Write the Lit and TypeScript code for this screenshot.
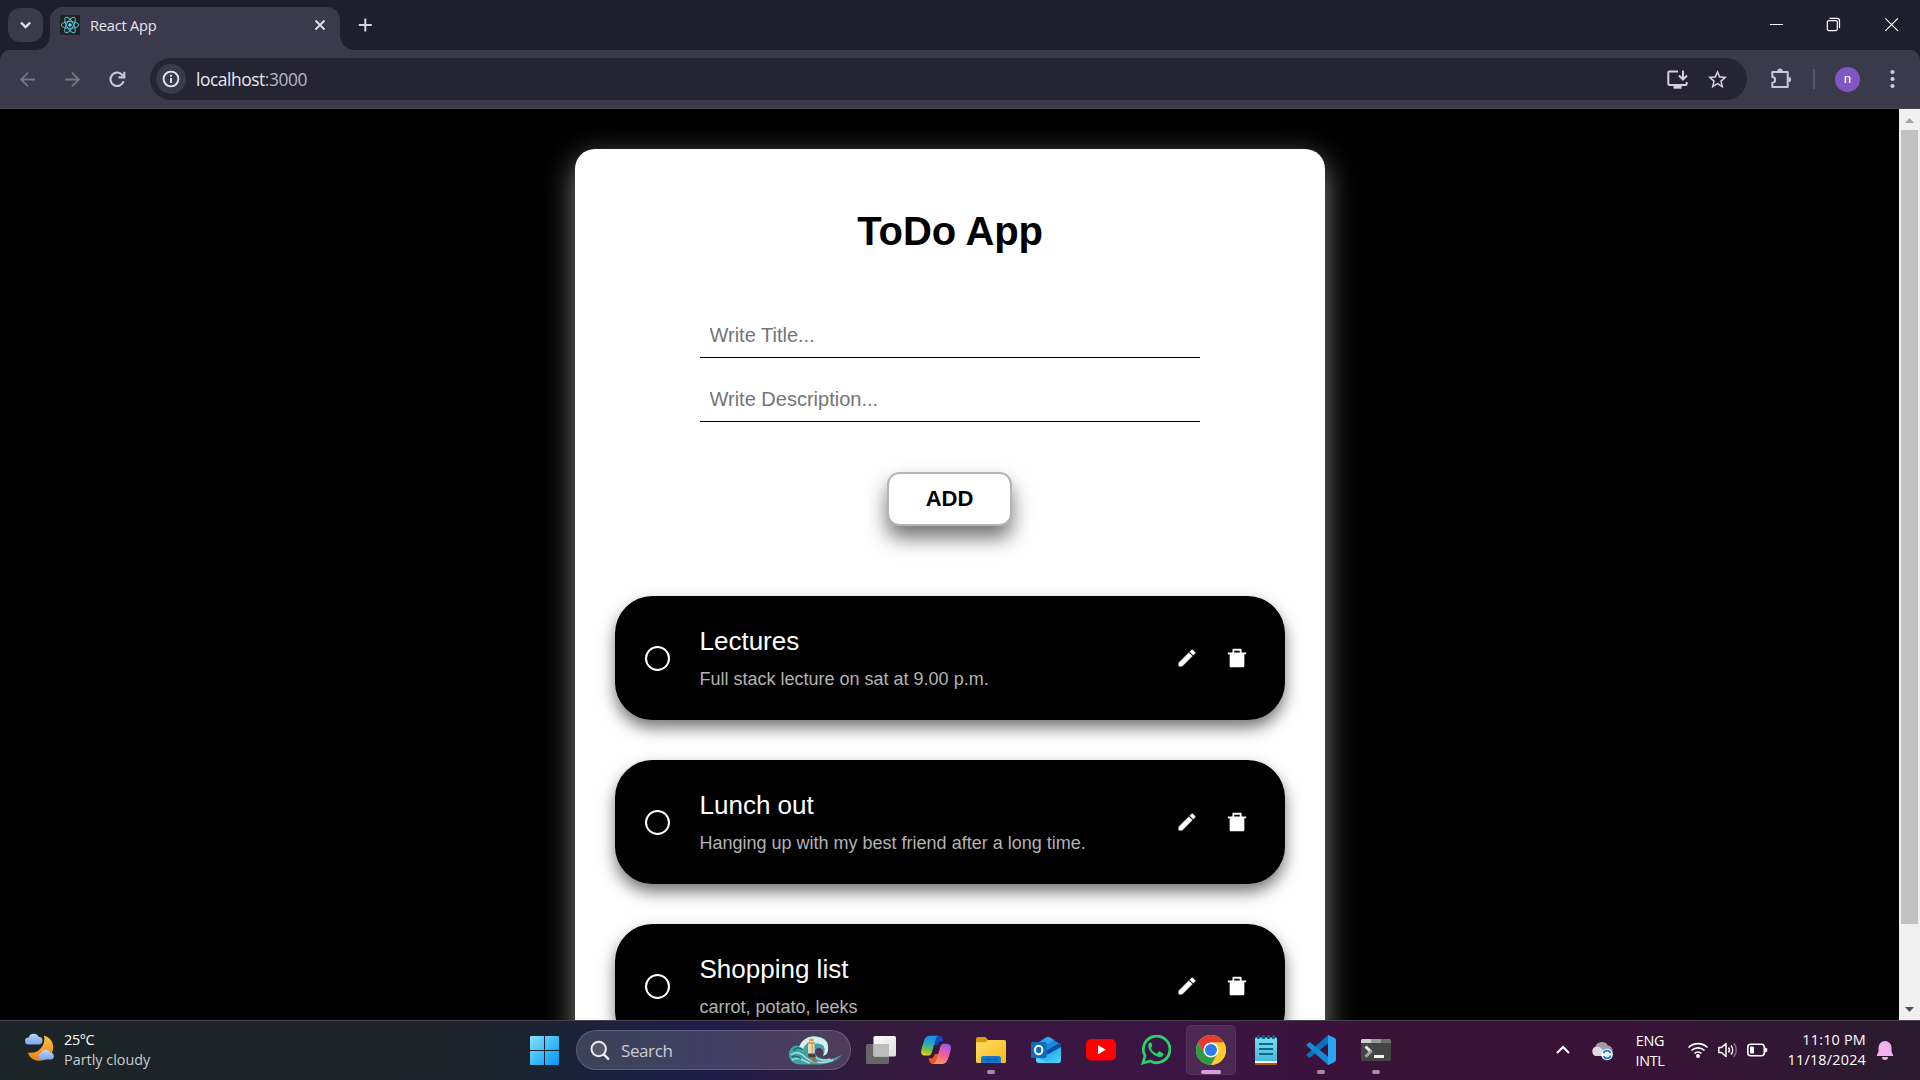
import { LitElement, html, css, svg } from "lit";
import { customElement, property } from "lit/decorators.js";

const uiFont = css`"Open Sans", "Noto Sans", sans-serif`;
const pageFont = css`"Liberation Sans", Arial, sans-serif`;

interface Todo {
  title: string;
  text: string;
}

const todos: Todo[] = [
  { title: "Lectures", text: "Full stack lecture on sat at 9.00 p.m." },
  { title: "Lunch out", text: "Hanging up with my best friend after a long time." },
  { title: "Shopping list", text: "carrot, potato, leeks" },
];

/* ---------- Browser chrome ---------- */

@customElement("browser-bar")
class BrowserBar extends LitElement {
  static styles = css`
    :host { display: block; font-family: ${uiFont}; }
    svg { display: block; }
    .strip { height: 50px; background: #1e1e2f; display: flex; box-sizing: border-box; padding-left: 8px; }
    .chevron { width: 35px; height: 34px; margin-top: 8px; border-radius: 12px; background: #3a3a4c; }
    .tab { position: relative; width: 290px; height: 43px; margin: 7px 0 0 7px; border-radius: 13px 13px 0 0;
      background: #3a3a4c; display: flex; align-items: center; box-sizing: border-box; padding: 0 13px 7px 10px; }
    .flare { position: absolute; bottom: 0; width: 14px; height: 14px; }
    .left { right: 100%; background: radial-gradient(circle at 0 0, transparent 13.5px, #3a3a4c 14px); }
    .right { left: 100%; background: radial-gradient(circle at 100% 0, transparent 13.5px, #3a3a4c 14px); }
    .name { margin-left: 10px; font-size: 14.6px; line-height: 20px; color: #e6e4f0; letter-spacing: -0.2px; flex: 1; }
    .plus { margin: 16px 0 0 16px; }
    .controls { margin-left: auto; display: flex; padding: 17px 19px 0 0; gap: 42px; }
    .corners { background: #1e1e2f; }
    .toolbar { height: 58px; background: #3a3a4c; border-radius: 10px 10px 0 0; display: flex; align-items: center;
      box-sizing: border-box; padding: 0 19px 0 17px; }
    .nav { display: flex; gap: 24px; width: 133px; }
    .omni { width: 1597px; height: 42px; border-radius: 21px; background: #242433; display: flex; align-items: center;
      box-sizing: border-box; padding: 0 18px 0 6px; }
    .info { width: 30px; height: 30px; border-radius: 50%; background: #3a3a4c; }
    .url { margin-left: 10px; flex: 1; font-size: 17.4px; letter-spacing: -0.45px; color: #e8e6f2; line-height: 24px; }
    .port { color: #b9b7cb; }
    .inner { display: flex; gap: 17px; }
    .ext { margin-left: 22px; }
    .sep { width: 2px; height: 20px; margin-left: 20px; background: #57566b; }
    .avatar { width: 25px; height: 25px; border-radius: 50%; background: #7e57c2; color: #fff; text-align: center;
      font: 13.5px/23px Roboto, sans-serif; margin-left: 20px; }
    .dots { margin-left: auto; }
    .edge { height: 1px; background: #48484e; }
  `;

  render() {
    return html`
      <div class="strip">
        <div class="chevron">
          <svg width="35" height="34" fill="none" stroke="#e4e3f0" stroke-width="2.2"><path d="M13 14.5l4.6 4.6 4.6-4.6" /></svg>
        </div>
        <div class="tab">
          <span class="flare left"></span><span class="flare right"></span>
          <svg width="20" height="20" viewBox="0 0 20 20">
            <rect width="20" height="20" rx="1" fill="#222" />
            <g fill="none" stroke="#52bdd8" stroke-width="1">
              <ellipse cx="10" cy="10" rx="8.8" ry="3.4" />
              <ellipse cx="10" cy="10" rx="8.8" ry="3.4" transform="rotate(60 10 10)" />
              <ellipse cx="10" cy="10" rx="8.8" ry="3.4" transform="rotate(120 10 10)" />
            </g>
            <circle cx="10" cy="10" r="1.7" fill="#61dafb" />
          </svg>
          <span class="name">React App</span>
          <svg width="14" height="14" stroke="#e4e3f0" stroke-width="1.8"><path d="M2.5 2.5l9 9M11.5 2.5l-9 9" /></svg>
        </div>
        <svg class="plus" width="18" height="18" stroke="#d4d2e6" stroke-width="2"><path d="M9.3 2.5v13M2.8 9h13" /></svg>
        <div class="controls">
          <svg width="18" height="17" stroke="#fff"><path d="M5 7.5h13" /></svg>
          <svg width="17" height="17" fill="none" stroke="#fff" stroke-width="1.2">
            <rect x="2.3" y="3.6" width="10" height="10" rx="1.5" />
            <path d="M4.5 1.3h7.6a2.4 2.4 0 0 1 2.4 2.4v7.6" />
          </svg>
          <svg width="17" height="17" stroke="#fff" stroke-width="1.2"><path d="M1.3 1.3l12.600 12.600M13.900 1.300L1.300 13.900" /></svg>
        </div>
      </div>
      <div class="corners">
        <div class="toolbar">
          <div class="nav">
            <svg width="21" height="21" fill="none" stroke="#757485" stroke-width="1.9"><path d="M18 10.5H4.5M11 3.7L4.2 10.5l6.800 6.800" /></svg>
            <svg width="21" height="21" fill="none" stroke="#757485" stroke-width="1.9"><path d="M3 10.5h13.5M10 3.7l6.8 6.8L10 17.300" /></svg>
            <svg width="21" height="21" fill="none" stroke="#c9c7dc" stroke-width="2.1">
              <path d="M16.6 12.3A6.700 6.700 0 1 1 15.2 5.8L17 7.8" /><path d="M17.3 2.7v5.700h-5.800" />
            </svg>
          </div>
          <div class="omni">
            <div class="info">
              <svg width="30" height="30" fill="none" stroke="#e4e3f0" stroke-width="1.9">
                <circle cx="15" cy="15" r="7.400" /><path d="M15 14v5M15 10.800v2" />
              </svg>
            </div>
            <span class="url">localhost<span class="port">:3000</span></span>
            <div class="inner">
              <svg width="23" height="23" fill="none" stroke="#d6d0dd" stroke-width="2">
                <path d="M12 3.600H3.500a1.200 1.200 0 0 0-1.200 1.200v11a1.200 1.200 0 0 0 1.200 1.200h16a1.200 1.200 0 0 0 1.200-1.200V14" />
                <path d="M7.500 19.200h8" stroke-width="3" /><path d="M17 2.500v8.500M13 7.500l4 4 4-4" />
              </svg>
              <svg width="23" height="23" viewBox="0 0 24 24" fill="#d6d0dd">
                <path d="M22 9.240l-7.190-.62L12 2 9.190 8.630 2 9.240l5.460 4.730L5.820 21 12 17.270 18.180 21l-1.630-7.030L22 9.240zM12 15.400l-3.760 2.270 1-4.280-3.320-2.880 4.380-.38L12 6.100l1.710 4.040 4.380.38-3.320 2.880 1 4.280L12 15.400z" />
              </svg>
            </div>
          </div>
          <svg class="ext" width="24" height="24" fill="none" stroke="#c9c7e0" stroke-width="2">
            <path d="M3.300 4.900H18.700v15.100H3.300v-4.300a2.700 2.700 0 0 0 0-5.700z" stroke-linejoin="round" />
            <path d="M8.400 4.100a2.600 2.600 0 0 1 5.200 0zM19.500 9.800a2.600 2.600 0 0 1 0 5.200z" fill="#c9c7e0" stroke="none" />
          </svg>
          <div class="sep"></div>
          <div class="avatar">n</div>
          <svg class="dots" width="17" height="24" fill="#d0cfe2">
            <circle cx="8.500" cy="5" r="2.100" /><circle cx="8.500" cy="12" r="2.100" /><circle cx="8.500" cy="19" r="2.100" />
          </svg>
        </div>
      </div>
      <div class="edge"></div>
    `;
  }
}

/* ---------- Todo page ---------- */

@customElement("todo-item")
class TodoItem extends LitElement {
  @property({ attribute: false }) todo!: Todo;

  static styles = css`
    :host { display: flex; align-items: center; box-sizing: border-box; height: 124px; flex: none; padding: 0 37px 0 30px;
      background: #000; border-radius: 37.5px; box-shadow: 0 8px 16px rgba(0, 0, 0, 0.54); font-family: ${pageFont}; }
    .check { box-sizing: border-box; width: 25px; height: 25px; border: 2px solid #fff; border-radius: 50%; margin-top: 1px; }
    .body { flex: 1; margin-left: 30px; padding-bottom: 2px; }
    .title { font-size: 26px; line-height: 30px; color: #fff; }
    .text { font-size: 18px; line-height: 20px; margin-top: 13px; color: #b3b3b3; }
    .actions { display: flex; gap: 28px; }
    svg { display: block; fill: #fff; }
  `;

  render() {
    return html`
      <div class="check"></div>
      <div class="body">
        <div class="title">${this.todo.title}</div>
        <div class="text">${this.todo.text}</div>
      </div>
      <div class="actions">
        <svg width="22" height="22" viewBox="0 0 24 24">
          <path d="M3 17.250V21h3.750L17.810 9.940l-3.750-3.750L3 17.250zM20.710 7.040c.39-.39.39-1.020 0-1.410l-2.340-2.340c-.39-.39-1.020-.39-1.410 0l-1.830 1.830 3.750 3.750 1.830-1.830z" stroke="#fff" stroke-width="0.5" />
        </svg>
        <svg width="22" height="22" viewBox="0 0 24 24">
          <path d="M17 6h5v2h-2v13a1 1 0 0 1-1 1H5a1 1 0 0 1-1-1V8H2V6h5V3a1 1 0 0 1 1-1h8a1 1 0 0 1 1 1zM9 4v2h6V4z" />
        </svg>
      </div>
    `;
  }
}

@customElement("todo-page")
class TodoPage extends LitElement {
  static styles = css`
    :host { display: flex; height: 911px; background: #000; overflow: hidden; font-family: ${pageFont}; }
    .view { flex: 1; display: flex; justify-content: center; align-items: flex-start; padding-top: 40px; }
    .card { box-sizing: border-box; width: 750px; height: 1000px; padding: 57px 40px 0; background: #fff; border-radius: 20px;
      box-shadow: 0 10px 30px rgba(255, 255, 255, 0.5); display: flex; flex-direction: column; }
    h1 { margin: 0; font-size: 40px; line-height: 50px; text-align: center; letter-spacing: -0.15px; padding-left: 1px; }
    .form { display: flex; flex-direction: column; align-items: center; margin: 53px 0 70px; }
    .field { box-sizing: border-box; width: 500px; height: 49px; margin-bottom: 15px; padding: 5px 10px 0; border: 0;
      border-bottom: 1px solid #000; background: none; outline: none; font: 20px ${pageFont}; }
    .field::placeholder { color: #757575; opacity: 1; }
    .add { box-sizing: border-box; width: 125px; height: 54px; margin-top: 35px; padding: 0; border: 2px solid #b5b5b5;
      border-radius: 12.5px; background: #fff; color: #000; font: bold 22px ${pageFont};
      box-shadow: 0 12px 20px rgba(0, 0, 0, 0.55); }
    .list { display: flex; flex-direction: column; gap: 40px; }
    .bar { width: 21px; background: #f0f0f0; display: flex; flex-direction: column; align-items: center; }
    .bar svg { flex: none; display: block; }
    .thumb { width: 17px; height: 794px; background: #c1c1c1; margin-bottom: auto; }
  `;

  render() {
    return html`
      <div class="view">
        <div class="card">
          <h1>ToDo App</h1>
          <div class="form">
            <input class="field" placeholder="Write Title..." />
            <input class="field" placeholder="Write Description..." />
            <button class="add">ADD</button>
          </div>
          <div class="list">${todos.map((t) => html`<todo-item .todo=${t}></todo-item>`)}</div>
        </div>
      </div>
      <div class="bar">
        <svg width="21" height="21" fill="#a3a3a3"><path d="M6 14l4.500-5 4.500 5z" /></svg>
        <div class="thumb"></div>
        <svg width="21" height="21" fill="#505050"><path d="M6 8l4.500 5 4.500-5z" /></svg>
      </div>
    `;
  }
}

/* ---------- Taskbar ---------- */

const taskIcons = {
  taskview: svg`
    <rect x="0" y="9" width="23" height="20" rx="1.500" fill="#666" />
    <rect x="7.500" y="1" width="22.500" height="20.500" rx="1.500" fill="url(#tv)" />
    <path d="M7.500 9H23v12.500H9a1.500 1.500 0 0 1-1.500-1.500z" fill="#bdbdbd" />`,
  copilot: svg`
    <path d="M21.500 3.800C20.900 1.900 19.800.8 17.800.8H16c-2.300 0-3.500 1.200-4.200 3.400L10 10h6.500l1.200-2.200c.5-1 1.300-1.500 2.400-1.500h2.200z" fill="#1748c8" />
    <path d="M8.500 26.200c.6 1.900 1.700 2.800 3.700 2.800h2.300c2.300 0 3.500-1.500 4.200-3.700L20.500 19H14l-1.300 2.500c-.5 1-1.300 1.800-2.400 1.800H7.600z" fill="#e8562e" />
    <path d="M17.800.8H8.500C5 .8 3.600 4 2.600 7.200 1.200 11.500-.4 16 .3 18.200c.6 2 2.300 2.400 4.200 2.400h2.800c2 0 3-1.400 3.600-3.400L14.700 4.500c.6-2.200 1.500-3.500 3.100-3.700z" fill="url(#cpA)" />
    <path d="M12.200 29h9.300c3.500 0 5-3.200 6-6.400 1.300-4.300 2.900-8.800 2.200-11-.6-2-2.300-2.800-4.200-2.800h-2.800c-2 0-3 1.800-3.600 3.800l-3.800 12.700c-.6 2.200-1.500 3.500-3.100 3.700z" fill="url(#cpB)" />`,
  folder: svg`
    <path d="M0 4a2 2 0 0 1 2-2h7.500l3 3.500H20V9H0z" fill="#d99b08" />
    <path d="M0 7.200h9.500L12.500 5H28.500A1.500 1.500 0 0 1 30 6.500V26.500a1.500 1.500 0 0 1-1.500 1.500h-27A1.500 1.500 0 0 1 0 26.500z" fill="url(#fd)" />
    <path d="M5 28v-4.500A2.500 2.500 0 0 1 7.500 21h15a2.500 2.500 0 0 1 2.500 2.500V28z" fill="#0f78cf" />
    <path d="M9 24.500h12" stroke="#0a4f91" stroke-width="1.300" stroke-linecap="round" />`,
  outlook: svg`
    <path d="M5 9L15.500 2.300a3 3 0 0 1 3 0L30 9.500V25a3 3 0 0 1-3 3H10z" fill="#1388dc" />
    <path d="M5 9L15.500 2.300a3 3 0 0 1 3 0L23 5 8 15z" fill="#30a4ec" />
    <path d="M15 16L29.500 7.500 30 13 17 21z" fill="#0b4c9e" />
    <path d="M30 12v13a3 3 0 0 1-3 3H8c-1.500 0-2.500-.5-3-2z" fill="url(#ol)" />
    <path d="M5 21l12 7H8a3 3 0 0 1-3-3z" fill="#56d4f4" />
    <rect x="0" y="7" width="15.500" height="16" rx="1.500" fill="#0f6cbd" />
    <ellipse cx="7.700" cy="15" rx="3.700" ry="4.300" fill="none" stroke="#fff" stroke-width="2" />`,
  youtube: svg`
    <rect x="0" y="4" width="30" height="21.500" rx="5" fill="#f00" />
    <path d="M12 10.300l8 4.500-8 4.500z" fill="#fff" />`,
  whatsapp: svg`
    <path d="M2 28l2-7.200A13.300 13.300 0 1 1 9.200 26z" fill="none" stroke="#25d366" stroke-width="2.800" stroke-linejoin="miter" />
    <path d="M10.500 8.200c-.4-.8-1-.8-1.600-.6C7.300 8.600 6.900 10.500 7.400 12.200c1.200 4.200 5 8 9.600 9.500 2.200.7 4.700-.1 5.200-2.300.2-.9.100-1.200-.5-1.500l-3-1.500c-.5-.2-.8-.1-1.100.3l-1.200 1.500c-.3.400-.6.400-1.100.2-2.400-1-4.200-2.800-5.300-5-.2-.4-.1-.7.2-1l.9-1.100c.2-.4.300-.6.100-1z" fill="#25d366" />`,
  chrome: svg`
    <circle cx="15" cy="15" r="15" fill="#fcc934" />
    <path d="M8.500 18.700L2.010 7.500A15 15 0 0 0 15 30L21.500 18.700z" fill="#2d9a47" />
    <path d="M15 7.500h12.990A15 15 0 0 0 2.010 7.500L8.500 18.700z" fill="#e33b2e" />
    <path d="M15 7.500h12.990A15 15 0 0 1 15 30l6.500-11.300z" fill="#fcc934" />
    <circle cx="15" cy="15" r="7.500" fill="#fff" /><circle cx="15" cy="15" r="6" fill="#2f7de9" />`,
  notepad: svg`
    <rect x="4" y="26" width="22" height="4" rx="1" fill="#a95a14" />
    <rect x="4" y="5" width="22" height="23" fill="#f4f4f4" />
    <rect x="4" y="2.500" width="22" height="23.500" rx="1" fill="url(#np)" />
    <path d="M8 9h14M8 14h14M8 19h14" stroke="#0b6a8c" stroke-width="2" />
    <path d="M7.500 0v4M12.500 0v4M17.500 0v4M22.500 0v4" stroke="#0d5f80" stroke-width="2.800" />`,
  vscode: svg`
    <path d="M22 0l6.600 3A2.400 2.400 0 0 1 30 5v20a2.400 2.400 0 0 1-1.400 2L22 30z" fill="#2aa5f2" />
    <path d="M22 0L1 19c-.6.600-.6 1.300 0 1.800l1.800 1.600c.5.400 1 .4 1.500 0L22 8.500z" fill="#0a72b8" />
    <path d="M22 30L1 11c-.6-.6-.6-1.300 0-1.800l1.800-1.600c.5-.4 1-.4 1.500 0L22 21.500z" fill="#1788d2" />`,
  terminal: svg`
    <rect x="0" y="4" width="30" height="22" rx="1.500" fill="#454545" />
    <path d="M0 8V5.500A1.500 1.500 0 0 1 1.500 4H10v4z" fill="#cfcfcf" /><path d="M10 4h10v4H10z" fill="#9a9a9a" />
    <path d="M20 4h8.500A1.500 1.500 0 0 1 30 5.500V8H20z" fill="#707070" />
    <path d="M4.500 11.500l5.500 5.300" stroke="#e8e8e8" stroke-width="3" />
    <path d="M10.500 15.800l-6 6" stroke="#a5a5a5" stroke-width="3" />
    <path d="M13 21.500h10" stroke="#f2f2f2" stroke-width="3" />`,
};

const tasks: { icon: keyof typeof taskIcons; state: string }[] = [
  { icon: "taskview", state: "" },
  { icon: "copilot", state: "" },
  { icon: "folder", state: "open" },
  { icon: "outlook", state: "" },
  { icon: "youtube", state: "" },
  { icon: "whatsapp", state: "" },
  { icon: "chrome", state: "active" },
  { icon: "notepad", state: "" },
  { icon: "vscode", state: "open" },
  { icon: "terminal", state: "open" },
];

@customElement("task-bar")
class TaskBar extends LitElement {
  static styles = css`
    :host { display: flex; box-sizing: border-box; height: 60px; border-top: 1px solid #4a4350; font-family: ${uiFont}; color: #fff;
      background: linear-gradient(90deg, #1b2426 0, #1c232a 480px, #1a2240 620px, #201d4a 710px, #331b3c 860px, #3a1642 1010px, #3b1443 1200px, #3a1237 1400px, #3a1238 1600px, #2d1a30 1860px, #2a1a2e 1920px); }
    svg { display: block; }
    .weather { width: 530px; box-sizing: border-box; padding: 9px 0 0 25px; display: flex; gap: 9px; }
    .lines { font-size: 14.4px; line-height: 20px; letter-spacing: -0.35px; }
    .sub { color: #c9cccd; letter-spacing: 0; }
    .weather svg { margin-top: 3px; }
    .start { margin-top: 15px; }
    .search { box-sizing: border-box; width: 275px; height: 40px; margin: 9px 5px 0 17px; padding: 0 8px 0 13px;
      border: 1px solid rgba(255, 255, 255, 0.16); border-radius: 20px; background: rgba(255, 255, 255, 0.15);
      display: flex; align-items: center; font-size: 17px; letter-spacing: -0.4px; color: #cfcdd6; }
    .label { flex: 1; margin-left: 10px; }
    .tasks { display: flex; gap: 5px; padding-top: 4px; }
    .task { box-sizing: border-box; width: 50px; height: 50px; padding-top: 10px; border-radius: 5px; display: flex; flex-direction: column;
      align-items: center; gap: 5px; }
    .task::after { content: ""; height: 4px; width: 0; border-radius: 2px; background: #a391a8; }
    .open::after { width: 8px; }
    .active { background: rgba(255, 255, 255, 0.09); box-shadow: inset 0 0 0 1px rgba(255, 255, 255, 0.06); }
    .active::after { width: 20px; background: #dc9de0; }
    .tray { margin-left: auto; display: flex; align-items: flex-start; padding-right: 26px; }
    .tray svg { margin-top: 17px; }
    .tray .cloud { margin-left: -1px; }
    .lang { width: 40px; margin: 10px 0 0 16px; text-align: center; }
    .lang .lines { letter-spacing: -0.3px; }
    .clock .lines { letter-spacing: 0.2px; }
    .status { display: flex; gap: 8px; margin-left: 17px; }
    .clock { width: 110px; margin: 9px 0 0 -13px; text-align: right; }
    .bell { margin-left: 10px; }
  `;

  render() {
    return html`
      <div class="weather">
        <svg width="30" height="29" viewBox="0 0 30 29">
          <defs>
            <linearGradient id="mn" x1="0" y1="0" x2="0" y2="1"><stop offset="0" stop-color="#f8c63c" /><stop offset="1" stop-color="#ef7d1c" /></linearGradient>
            <linearGradient id="cl" x1="0" y1="0" x2="0" y2="1"><stop offset="0" stop-color="#bcd5fb" /><stop offset="1" stop-color="#7aa5ee" /></linearGradient>
          </defs>
          <path d="M19 2.500C26 4.500 29 10.500 28 16.500 26.500 25 18.500 29 11.500 27.500 7 26.500 4 23.500 3 19.500c5 .8 9.500-.3 13-4.500 3-3.500 4-8 3-12.500z" fill="url(#mn)" />
          <path d="M3.500 11.500a3.500 3.500 0 0 1 .2-7A5.200 5.200 0 0 1 13.500 3.800a3.900 3.900 0 0 1 1 7.700z" fill="url(#cl)" />
          <path d="M16 26.500a3.300 3.300 0 0 1 .2-6.500 4.700 4.700 0 0 1 8.800-.5 3.600 3.600 0 0 1 1.400 7z" fill="url(#cl)" />
        </svg>
        <div class="lines"><div>25°C</div><div class="sub">Partly cloudy</div></div>
      </div>
      <svg class="start" width="29" height="29">
        <defs><linearGradient id="wn" gradientUnits="userSpaceOnUse" x1="0" y1="0" x2="29" y2="29">
          <stop offset="0" stop-color="#8ae2ff" /><stop offset="0.5" stop-color="#3cbdf8" /><stop offset="1" stop-color="#0a93f5" /></linearGradient></defs>
        <path d="M1 0h13v14H0V1a1 1 0 0 1 1-1zM15 0h13a1 1 0 0 1 1 1v13H15zM0 15h14v14H1a1 1 0 0 1-1-1zM15 15h14v13a1 1 0 0 1-1 1H15z" fill="url(#wn)" />
      </svg>
      <div class="search">
        <svg width="21" height="21" fill="rgba(255,255,255,.12)" stroke="#eeedf2" stroke-width="2">
          <circle cx="8.700" cy="9" r="7.200" /><path d="M13.700 14.300l4.500 4.500" stroke-width="2.400" stroke-linecap="round" />
        </svg>
        <span class="label">Search</span>
        <svg width="54" height="30" viewBox="0 0 54 30">
          <path d="M1 21C0 13 7 9 12 11 15 3 24-1 31 2c7 1 10 6 9 12 0 4-2 6-5 7 1-4 0-8-4-8-4 0-5 4-3 7 4 5 14 6 26 0-6 7-15 9.500-25 9.500H13C6 29.500 2 26 1 21z" fill="#3fa3a9" />
          <path d="M11 12c3-8 11-12 19-10 7 1 11 6 10 12 0 4-2 6-5 7 3-6 2-11-3-12-7-2-11 3-11 10-1-6 1-10 4-12-6 0-10 4-10 9-2-2-3-3-4-4z" fill="#d5f0ef" />
          <path d="M3 20c5-4 10-2 14 2 7 6 17 7 28 3M4 25c7-4 11 1 18 3M27 21c2 4 9 5 15 3" fill="none" stroke="#a6dcda" stroke-width="1.500" />
          <path d="M5 16c3-4 7-4 10-1M4 22c3-2 7 0 9 2" fill="none" stroke="#167580" stroke-width="1.600" />
          <g transform="translate(4 0)">
            <path d="M16 8l1-2.500 1.300-3.500h2l1.200 3.500L22.500 8v11h-6.500z" fill="#efd9a5" />
            <path d="M15.500 8h7.500M17 5h5" stroke="#b98e50" stroke-width="1.400" />
            <path d="M20.300 9v9" stroke="#cfae70" stroke-width="1.500" />
            <path d="M16 18.500h7l1 4h-7.500z" fill="#3d4550" /><path d="M17 22.500h6.500l2 5c-4 0-7-2-8.500-5z" fill="#9b6c50" />
          </g>
        </svg>
      </div>
      <div class="tasks">
        ${tasks.map((t) => html`
          <div class="task ${t.state}">
            <svg width="30" height="30" viewBox="0 0 30 30">
              <defs>
                <linearGradient id="tv" x1="0" y1="0" x2="1" y2="1"><stop offset="0" stop-color="#fff" /><stop offset="1" stop-color="#dcdcdc" /></linearGradient>
                <linearGradient id="fd" x1="0" y1="0" x2="1" y2="1"><stop offset="0" stop-color="#ffdc68" /><stop offset="1" stop-color="#fbbb12" /></linearGradient>
                <linearGradient id="ol" x1="0" y1="0" x2="1" y2="1"><stop offset="0" stop-color="#1683d8" /><stop offset="0.55" stop-color="#2fb4ee" /><stop offset="1" stop-color="#50e0f8" /></linearGradient>
                <linearGradient id="np" x1="0" y1="0" x2="0" y2="1"><stop offset="0" stop-color="#7ddcf0" /><stop offset="1" stop-color="#45b8da" /></linearGradient>
                <linearGradient id="cpA" x1="0.5" y1="0" x2="0.3" y2="1"><stop offset="0" stop-color="#1b8ef0" /><stop offset="0.35" stop-color="#22a5c0" /><stop offset="0.65" stop-color="#5cbd5c" /><stop offset="1" stop-color="#f0cf14" /></linearGradient>
                <linearGradient id="cpB" x1="0.7" y1="0" x2="0.3" y2="1"><stop offset="0" stop-color="#a456ee" /><stop offset="0.5" stop-color="#ee5f9b" /><stop offset="1" stop-color="#ff9c54" /></linearGradient>
              </defs>
              ${taskIcons[t.icon]}
            </svg>
          </div>`)}
      </div>
      <div class="tray">
        <svg width="16" height="24" fill="none" stroke="#fff" stroke-width="2"><path d="M2 15l6-6 6 6" /></svg>
        <svg class="cloud" width="44" height="24">
          <path d="M26 18a5 5 0 0 1-.5-9.500A7 7 0 0 1 38 7.500c4 .5 5 4 4.500 7L40 18z" fill="#a39aa6" />
          <path d="M26 18a4.800 4.800 0 0 1 0-9.200A6 6 0 0 1 32 11l6 7z" fill="#ded9df" />
          <circle cx="37" cy="16.500" r="5.800" fill="#fff" />
          <circle cx="37" cy="16.500" r="3.800" fill="none" stroke="#1976d2" stroke-width="1.700" stroke-dasharray="9 2.900" stroke-dashoffset="-1" />
        </svg>
        <div class="lang"><div class="lines"><div>ENG</div><div>INTL</div></div></div>
        <div class="status">
          <svg width="22" height="24" fill="none" stroke="#fff" stroke-width="1.600">
            <path d="M1.500 9.500a13.500 13.500 0 0 1 19 0M4.500 12.500a9.300 9.300 0 0 1 13 0M7.500 15.500a5 5 0 0 1 7 0" /><circle cx="11" cy="18" r="1.200" fill="#fff" />
          </svg>
          <svg width="22" height="24" fill="none" stroke="#fff" stroke-width="1.500">
            <path d="M1.800 9.500H4.500L9 5.500v13l-4.500-4H1.800z" stroke-linejoin="round" /><path d="M11.500 9.500a4 4 0 0 1 0 5M14 7.500a7 7 0 0 1 0 9" />
            <path d="M16.800 5.300a10.500 10.500 0 0 1 0 13.400" stroke="#86708c" />
          </svg>
          <svg width="22" height="24" fill="none" stroke="#fff" stroke-width="1.600">
            <rect x="0.800" y="6.300" width="16.500" height="11.400" rx="3" /><rect x="3" y="8.500" width="4" height="7" rx="1" fill="#fff" stroke="none" />
            <path d="M18 9.500l2.200 1v3l-2.200 1z" fill="#fff" stroke="none" />
          </svg>
        </div>
        <div class="clock"><div class="lines"><div>11:10 PM</div><div>11/18/2024</div></div></div>
        <svg class="bell" width="18" height="24" fill="#efb4ec">
          <path d="M9 3a6.500 6.500 0 0 1 6.500 6.500v4l1.700 3.700c.2.500 0 .8-.5.800H1.300c-.5 0-.7-.3-.5-.8l1.700-3.700v-4A6.500 6.500 0 0 1 9 3z" />
          <path d="M6 19h6a3 3 0 0 1-6 0z" />
        </svg>
      </div>
    `;
  }
}

@customElement("app-root")
class AppRoot extends LitElement {
  static styles = css`
    :host { display: flex; flex-direction: column; width: 1920px; height: 1080px; overflow: hidden; background: #000; }
    browser-bar, todo-page, task-bar { flex: none; }
  `;

  render() {
    return html`<browser-bar></browser-bar><todo-page></todo-page><task-bar></task-bar>`;
  }
}
